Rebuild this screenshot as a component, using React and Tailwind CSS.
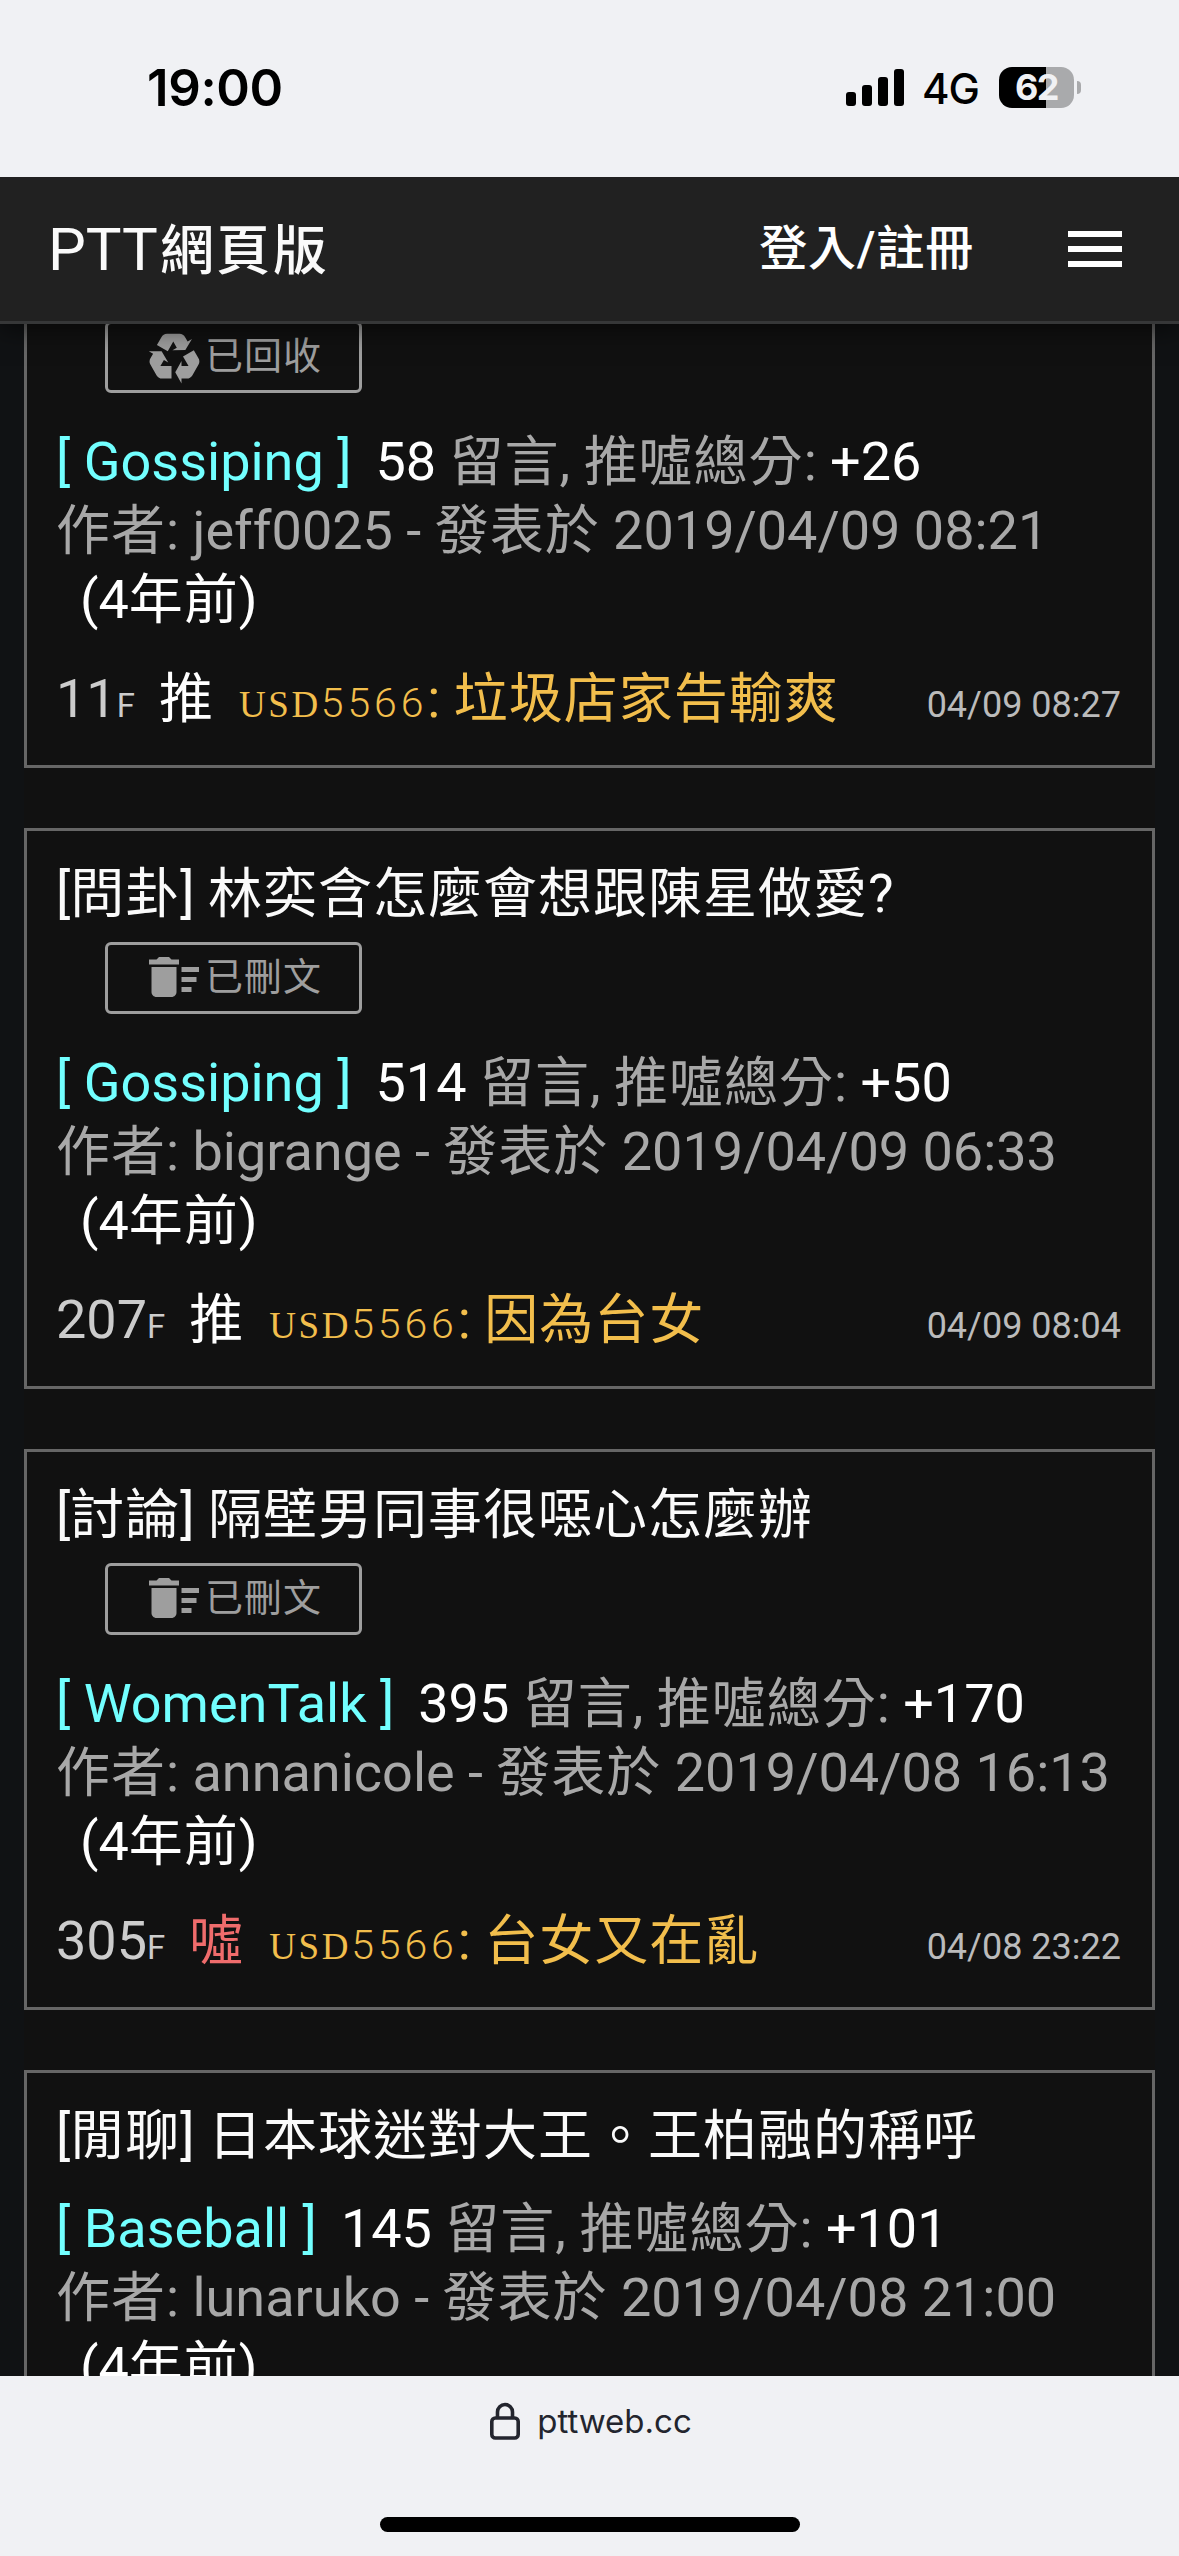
import React from "react";
import { MdDeleteSweep, MdMenu } from "react-icons/md";

const CJK_RUN = /([\u3000-\u9fff]+)/;

// Sets Han runs with slightly wider tracking than the Latin text around them.
function Mixed({ children }) {
  return String(children)
    .split(CJK_RUN)
    .map((part, i) =>
      i % 2 === 1 ? (
        <span key={i} className="relative top-px tracking-[1px]">
          {part}
        </span>
      ) : (
        part
      )
    );
}

function RecycleIcon() {
  return (
    <svg viewBox="0 0 24 24" className="size-[60px] shrink-0" fill="currentColor">
      <path d="M21.82,15.42L19.32,19.75C18.83,20.61 17.92,21.06 17,21H15V23L12.5,18.5L15,14V16H17.82L15.6,12.15L19.93,9.65L21.73,12.77C22.25,13.54 22.32,14.57 21.82,15.42M9.21,3.06H14.21C15.19,3.06 16.04,3.63 16.45,4.45L17.45,6.19L19.18,5.19L16.54,9.6L11.39,9.69L13.12,8.69L11.71,6.24L9.5,10.09L5.16,7.59L6.96,4.47C7.37,3.64 8.22,3.06 9.21,3.06M5.05,19.76L2.55,15.43C2.06,14.58 2.13,13.56 2.64,12.79L3.64,11.06L1.91,10.06L7.05,10.14L9.7,14.56L7.97,13.56L6.56,16H11V21H7.4C6.47,21.07 5.55,20.61 5.05,19.76Z" />
    </svg>
  );
}

function StatusBar() {
  return (
    <div className="relative z-20 flex h-[177px] shrink-0 items-start justify-between bg-[#f0f1f4] pl-[147px] pr-[98px] font-['Inter',sans-serif] text-black">
      <div className="mt-[57px] text-[51px] font-semibold leading-[62px] tracking-[-0.4px]">19:00</div>
      <div className="mt-[67px] flex h-[41px] items-center">
        <div className="flex h-[37px] items-end gap-[6px]">
          <div className="h-[14px] w-[10px] rounded-[3px] bg-black" />
          <div className="h-[21px] w-[10px] rounded-[3px] bg-black" />
          <div className="h-[29px] w-[10px] rounded-[3px] bg-black" />
          <div className="h-[37px] w-[10px] rounded-[3px] bg-black" />
        </div>
        <div className="ml-[18px] w-[57px] pt-[2px] text-[42px] font-medium leading-[42px] tracking-[-1px]">4G</div>
        <div className="ml-[20px] flex h-[41px] w-[75px] items-center justify-center rounded-[13px] bg-[linear-gradient(90deg,#000_47px,#a9aaac_47px)] text-[36px] font-bold leading-[41px] tracking-[-1.5px] text-[#f0f1f4]">
          62
        </div>
        <div className="ml-[3px] h-[13px] w-[4px] rounded-r-full bg-[#a9aaac]" />
      </div>
    </div>
  );
}

function Header() {
  return (
    <header className="relative z-10 flex h-[147px] shrink-0 items-center justify-between border-b-[3px] border-[#363738] bg-[#212121] px-[48px] text-white shadow-[0_6px_24px_rgba(0,0,0,0.55)]">
      <div className="flex items-baseline pt-[4px] leading-[84px] text-[#fafafa]">
        <span className="text-[60px]">PTT</span>
        <span className="ml-[2px] text-[54px] font-medium tracking-[2.4px]">網頁版</span>
      </div>
      <div className="flex items-center">
        <div className="mr-[85px] text-[48px] font-medium leading-[72px] tracking-[0.8px]">登入/註冊</div>
        <MdMenu className="size-[72px]" />
      </div>
    </header>
  );
}

function Badge({ kind }) {
  return (
    <div className="ml-[49px] mt-[14px] flex h-[72px] w-[257px] items-center justify-center rounded-[6px] border-[3px] border-[#9e9e9e] pb-[2px] pr-[1px] text-[38px] tracking-[1px] text-[#9e9e9e]">
      {kind === "recycled" ? <RecycleIcon /> : <MdDeleteSweep className="size-[60px] shrink-0" />}
      <span className="ml-px leading-none">{kind === "recycled" ? "已回收" : "已刪文"}</span>
    </div>
  );
}

function Card({ post }) {
  const { title, badge, board, count, score, author, date, reply } = post;
  return (
    <article className="shrink-0 border-[3px] border-[#666] pb-[32px] pl-[29px] pr-[31px] pt-[28px] text-[54px] leading-[69px] text-[#a8a8a8]">
      <h2 className="h-[69px] whitespace-pre text-[#fafafa]">
        <Mixed>{title}</Mixed>
      </h2>
      {badge && <Badge kind={badge} />}
      <div className={badge ? "mt-[34px]" : "mt-[24px]"}>
        <div className="h-[69px] whitespace-pre">
          <span className="mr-[24px] text-[#72ffff]">{`[ ${board} ]`}</span>
          <span className="text-white">{count}</span>
          <Mixed>{" 留言, 推噓總分: "}</Mixed>
          <span className="text-white">{score}</span>
        </div>
        <div className="h-[69px] whitespace-pre">
          <Mixed>{`作者: ${author} - 發表於 ${date}`}</Mixed>
        </div>
        <div className="h-[69px] pl-[24px] text-white">
          <Mixed>(4年前)</Mixed>
        </div>
      </div>
      {reply && (
        <div className="mt-[30px] flex h-[69px] items-baseline justify-between whitespace-pre">
          <div>
            <span className="text-[#ccc]">{reply.floor}</span>
            <span className="text-[33px] text-[#ccc]">F</span>
            <span
              className={
                reply.tag === "噓"
                  ? "relative top-px ml-[24px] mr-[26px] text-[#ef6c6c]"
                  : "relative top-px ml-[24px] mr-[26px] text-white"
              }
            >
              {reply.tag}
            </span>
            <span className="text-[#f2be4c]">
              <span className="font-['Liberation_Serif',serif] text-[37px] tracking-[2.6px]">USD</span>
              <span className="text-[41px] font-light tracking-[3.9px]">5566</span>
              <Mixed>{`: ${reply.text}`}</Mixed>
            </span>
          </div>
          <time className="text-[36px] text-[#bbb]">{reply.time}</time>
        </div>
      )}
    </article>
  );
}

const posts = [
  {
    title: "",
    badge: "recycled",
    board: "Gossiping",
    count: "58",
    score: "+26",
    author: "jeff0025",
    date: "2019/04/09 08:21",
    reply: { floor: "11", tag: "推", text: "垃圾店家告輸爽", time: "04/09 08:27" },
  },
  {
    title: "[問卦] 林奕含怎麼會想跟陳星做愛?",
    badge: "deleted",
    board: "Gossiping",
    count: "514",
    score: "+50",
    author: "bigrange",
    date: "2019/04/09 06:33",
    reply: { floor: "207", tag: "推", text: "因為台女", time: "04/09 08:04" },
  },
  {
    title: "[討論] 隔壁男同事很噁心怎麼辦",
    badge: "deleted",
    board: "WomenTalk",
    count: "395",
    score: "+170",
    author: "annanicole",
    date: "2019/04/08 16:13",
    reply: { floor: "305", tag: "噓", text: "台女又在亂", time: "04/08 23:22" },
  },
  {
    title: "[閒聊] 日本球迷對大王。王柏融的稱呼",
    board: "Baseball",
    count: "145",
    score: "+101",
    author: "lunaruko",
    date: "2019/04/08 21:00",
  },
];

function BottomBar() {
  return (
    <footer className="flex h-[180px] shrink-0 flex-col items-center bg-[#f0f1f4] pt-[24px]">
      <div className="flex h-[42px] items-center gap-[16px] pl-[2px] font-['Inter',sans-serif] text-[33px] leading-[42px] text-[#23252e]">
        <svg viewBox="0 0 32 38" className="h-[38px] w-[32px]" fill="none" stroke="currentColor" strokeWidth="3.6">
          <rect x="2.8" y="16" width="26.4" height="20" rx="3.5" />
          <path d="M8.5 16V10a7.5 7.5 0 0 1 15 0V16" />
        </svg>
        <span>pttweb.cc</span>
      </div>
      <div className="mt-[75px] h-[15px] w-[420px] rounded-full bg-black" />
    </footer>
  );
}

export default function App() {
  return (
    <div className="flex h-[2556px] w-[1179px] flex-col overflow-hidden bg-[#101214] font-['Roboto','Noto_Sans_CJK_TC',sans-serif]">
      <StatusBar />
      <Header />
      <main className="mx-[24px] min-h-0 flex-1 overflow-hidden bg-[#111]">
        <div className="-mt-[117px] flex flex-col gap-[60px]">
          {posts.map((post, i) => (
            <Card key={i} post={post} />
          ))}
        </div>
      </main>
      <BottomBar />
    </div>
  );
}
